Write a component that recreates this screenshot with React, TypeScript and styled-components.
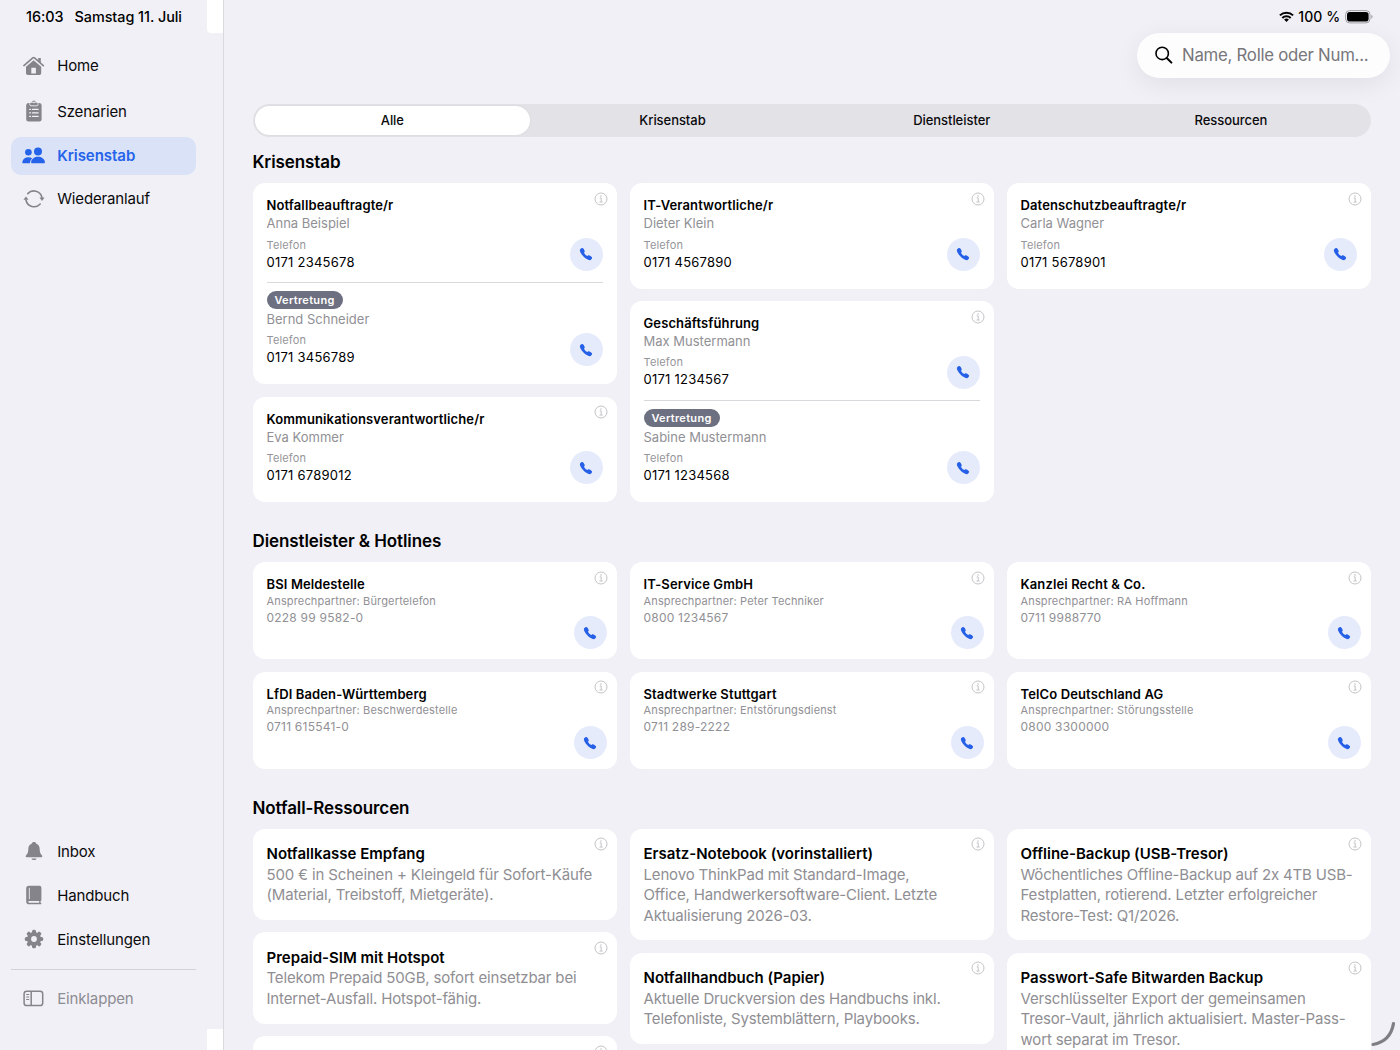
import React from "react";
import styled, { createGlobalStyle, css } from "styled-components";
import { IoCall } from "react-icons/io5";

const GlobalStyle = createGlobalStyle`
  *, *::before, *::after { box-sizing: border-box; }
  html, body { margin: 0; background: #f1f0f6; }
  body {
    font-family: Inter, "Liberation Sans", sans-serif;
    font-feature-settings: "calt" 0;
    color: #000;
    overflow: hidden;
  }
`;

const Shell = styled.div`
  position: relative;
  display: grid;
  grid-template-columns: 224px 1fr;
  grid-template-rows: 1050px;
  width: 1400px;
  height: 1050px;
  overflow: hidden;
  background: #f1f0f6;
`;

/* ---------- sidebar ---------- */

const Sidebar = styled.aside`
  position: relative;
  display: flex;
  flex-direction: column;
  padding: 0 27px 0 11px;
  border-right: 1px solid #dad9de;
`;

const EdgePatch = styled.span<{ $at: "top" | "bottom" }>`
  position: absolute;
  right: 0;
  width: 16px;
  background: #fff;
  ${(p) =>
    p.$at === "top"
      ? css`
          top: 0;
          height: 33px;
          border-bottom-left-radius: 4px;
        `
      : css`
          bottom: 0;
          height: 21px;
        `}
`;

const Clock = styled.div`
  display: flex;
  gap: 11px;
  height: 46px;
  padding: 8px 0 0 15px;
  font-size: 14.4px;
  font-weight: 500;
  line-height: 18px;
  letter-spacing: -0.04px;
  white-space: nowrap;
`;

const Nav = styled.nav`
  display: flex;
  flex-direction: column;
  gap: 6px;
`;

const NavFooter = styled(Nav)`
  margin-top: auto;
  padding-bottom: 10.5px;
`;

const NavItem = styled.a<{ $height?: number; $active?: boolean; $muted?: boolean }>`
  display: flex;
  align-items: center;
  height: ${(p) => p.$height ?? 38}px;
  border-radius: 10px;
  font-size: 15px;
  letter-spacing: -0.14px;
  color: ${(p) => (p.$muted ? "#8d8c92" : "#0a0a0c")};
  ${(p) =>
    p.$active &&
    css`
      background: #d9e2f6;
      color: #2563eb;
      font-weight: 600;
      letter-spacing: -0.04px;
    `}
`;

const NavIcon = styled.span<{ $active?: boolean }>`
  display: flex;
  align-items: center;
  justify-content: center;
  width: 45px;
  margin-right: 1.2px;
  color: ${(p) => (p.$active ? "#2563eb" : "#85848a")};
`;

const Rule = styled.hr`
  width: 185px;
  height: 1px;
  margin: 0;
  border: 0;
  background: #d3d2d8;
`;

const Collapse = styled.div`
  padding: 10px 0 32.5px;
`;

/* ---------- main ---------- */

const Main = styled.main`
  min-width: 0;
  padding: 0 28.8px 0 28.5px;
`;

const DeviceStatus = styled.div`
  display: flex;
  align-items: center;
  justify-content: flex-end;
  height: 33px;
  margin-right: -1.6px;
  font-size: 14px;
  font-weight: 500;
`;

const Percent = styled.span`
  margin: 0 4.5px 0 4px;
  letter-spacing: 0.1px;
`;

const SearchRow = styled.div`
  display: flex;
  justify-content: flex-end;
  height: 71px;
  margin-right: -18.8px;
`;

const SearchField = styled.div`
  display: flex;
  align-items: center;
  gap: 9px;
  width: 253px;
  height: 44.5px;
  padding-left: 18px;
  border-radius: 23px;
  background: #fdfdfe;
  box-shadow: 0 6px 26px rgba(0, 0, 0, 0.07);
  color: #77767b;
  font-size: 16.8px;
  letter-spacing: -0.26px;
  white-space: nowrap;
`;

const Segments = styled.div`
  display: grid;
  grid-template-columns: repeat(4, 1fr);
  height: 32.5px;
  padding: 2px 0 2px 2px;
  border-radius: 17px;
  background: #e3e2e7;
`;

const Segment = styled.button<{ $active?: boolean }>`
  border: 0;
  padding: 0;
  border-radius: 15px;
  font: inherit;
  font-size: 13px;
  font-weight: 500;
  letter-spacing: -0.05px;
  color: #0a0a0c;
  background: ${(p) => (p.$active ? "#fff" : "transparent")};
  box-shadow: ${(p) => (p.$active ? "0 0 3px rgba(0,0,0,0.06)" : "none")};
  margin-right: ${(p) => (p.$active ? "3.5px" : "1.5px")};
`;

const Section = styled.section<{ $offset: number }>`
  padding-top: ${(p) => p.$offset}px;
`;

const SectionTitle = styled.h2`
  margin: 0 0 10px;
  height: 22px;
  font-size: 17px;
  font-weight: 600;
  line-height: 22px;
  letter-spacing: -0.1px;
`;

const Columns = styled.div`
  display: grid;
  grid-template-columns: repeat(3, 1fr);
  column-gap: 12.3px;
  align-items: start;
`;

const Stack = styled.div`
  display: flex;
  flex-direction: column;
  gap: 12.4px;
`;

const Card = styled.article<{ $pad: string; $height?: number }>`
  position: relative;
  padding: ${(p) => p.$pad};
  height: ${(p) => (p.$height ? `${p.$height}px` : "auto")};
  border-radius: 12px;
  background: #fff;
`;

const InfoBadge = styled.span`
  position: absolute;
  top: 8.6px;
  right: 9.2px;
  display: flex;
  color: #bdbcc0;
`;

const RoleTitle = styled.h3`
  margin: 0;
  height: 18px;
  font-size: 13px;
  font-weight: 600;
  line-height: 18px;
  letter-spacing: 0.12px;
`;

const PersonName = styled.p`
  margin: 0 0 5.5px;
  height: 18px;
  color: #919095;
  font-size: 13px;
  line-height: 18px;
  letter-spacing: 0;
`;

const PhoneRow = styled.div`
  display: flex;
  align-items: center;
  justify-content: space-between;
  height: 33.5px;
`;

const FieldLabel = styled.div`
  height: 15px;
  color: #96959a;
  font-size: 11px;
  line-height: 15px;
  letter-spacing: 0.14px;
`;

const FieldValue = styled.div`
  height: 18.5px;
  font-size: 13px;
  line-height: 18px;
  letter-spacing: 0.24px;
`;

const CallButton = styled.button`
  display: flex;
  align-items: center;
  justify-content: center;
  flex: none;
  width: 33px;
  height: 33px;
  padding: 0 1px 0 0;
  border: 0;
  border-radius: 50%;
  background: #e6ebfc;
  color: #2560e6;
`;

const Deputy = styled.div`
  margin-top: 11.3px;
  padding-top: 8px;
  border-top: 1px solid #d9d8dc;
`;

const DeputyTag = styled.span`
  display: block;
  width: 76px;
  height: 18px;
  margin-bottom: 0.3px;
  border-radius: 9px;
  background: #6d7080;
  color: #fff;
  font-size: 11px;
  font-weight: 600;
  line-height: 18px;
  letter-spacing: 0.3px;
  text-align: center;
`;

const ProviderRow = styled.div`
  display: flex;
  justify-content: space-between;
  align-items: flex-end;
  height: 74.5px;
`;

const ProviderText = styled.div`
  align-self: flex-start;
`;

const ProviderContact = styled.p`
  margin: 0.6px 0 0;
  color: #919095;
  font-size: 11px;
  line-height: 15px;
  letter-spacing: 0.15px;
`;

const ProviderNumber = styled.p`
  margin: 1px 0 0;
  color: #919095;
  font-size: 12px;
  line-height: 16px;
  letter-spacing: 0.22px;
`;

const ResourceTitle = styled.h3`
  margin: 0;
  height: 20.4px;
  font-size: 15px;
  font-weight: 600;
  line-height: 20.4px;
  letter-spacing: 0;
`;

const ResourceText = styled.p`
  margin: 0;
  color: #8f8e93;
  font-size: 15px;
  line-height: 20.4px;
  letter-spacing: -0.16px;
  white-space: pre;
`;

const PencilStroke = styled.svg`
  position: absolute;
  right: 4px;
  bottom: 3px;
`;

/* ---------- drawings ---------- */

const HomeIcon = () => (
  <svg width="22" height="20" viewBox="0.4 0 22 20">
    <path d="M15.6 1.9h2.6v5.2l-2.6-2.4z" fill="currentColor" />
    <path d="M1.3 9.6L10.2 1.9a1.3 1.3 0 0 1 1.7 0L20.7 9.6" fill="none" stroke="currentColor" strokeWidth="1.6" strokeLinecap="round" />
    <path
      fillRule="evenodd"
      d="M3.4 10.7L11 4.2l7.6 6.5v6.600a1.8 1.8 0 0 1-1.8 1.8H5.2a1.8 1.8 0 0 1-1.8-1.800zM9.200 11.800a.5.5 0 0 0-.5.5v5.200h4.600v-5.200a.5.5 0 0 0-.5-.5z"
      fill="currentColor"
    />
  </svg>
);

const ClipboardIcon = () => (
  <svg width="18" height="22" viewBox="0 0 18 22">
    <rect x="1.2" y="3" width="15.4" height="18.4" rx="2.5" fill="currentColor" />
    <circle cx="8.9" cy="2.4" r="2" fill="currentColor" />
    <rect x="4.8" y="2.2" width="8.2" height="3.6" rx="1.2" fill="currentColor" stroke="#f1f0f6" strokeWidth="0.9" />
    <circle cx="8.9" cy="2.6" r="0.7" fill="#f1f0f6" />
    <path
      d="M4.6 9.3h.9M4.6 12.8h.9M4.6 16.3h.9M7.4 9.3h5.8M7.4 12.8h5.8M7.4 16.3h5.8"
      stroke="#f1f0f6"
      strokeWidth="1.2"
      strokeLinecap="round"
    />
  </svg>
);

const PeopleIcon = () => (
  <svg width="24" height="17" viewBox="0 0 24 17" fill="currentColor">
    <circle cx="6.4" cy="5.3" r="3.3" />
    <path d="M1.3 16.3C.4 16.3.2 15.8.3 15 .8 12 3.2 10.3 6.4 10.3c1.5 0 2.8.4 3.8 1.1C8.7 12.7 7.8 14.4 8 16.3z" />
    <circle cx="16" cy="4.4" r="4" />
    <path d="M10.3 16.3c-.9 0-1.3-.5-1.2-1.3.5-3.2 3.4-5.2 6.9-5.2s6.4 2 6.9 5.2c.1.8-.3 1.3-1.2 1.3z" />
  </svg>
);

const CycleIcon = () => (
  <svg width="22" height="20" viewBox="0 0 22 20" fill="none" stroke="currentColor" strokeWidth="1.6" strokeLinecap="round">
    <path d="M4.8 4.6A8.2 8.2 0 0 1 18.9 8.4" />
    <path d="M17.2 15A8.2 8.2 0 0 1 3 11" />
    <path d="M16.5 8.5h5.1L19 12z M0.4 10.8h5.1L3 7.4z" fill="currentColor" stroke="none" />
  </svg>
);

const BellIcon = () => (
  <svg width="18" height="20" viewBox="0 0 18 20" fill="currentColor">
    <path d="M9 1.1c-1.200 0-2 .7-2.300 1.700C4.300 3.600 3.300 5.700 3.300 8.200c0 3.400-.7 4.200-2 5.700-.4.5-.6.9-.6 1.300 0 .7.5 1.100 1.400 1.100h13.800c.9 0 1.400-.4 1.400-1.100 0-.4-.2-.8-.6-1.300-1.300-1.500-2-2.300-2-5.700 0-2.500-1-4.600-3.400-5.400C11 1.800 10.200 1.100 9 1.100z" />
    <path d="M6.500 17.400h5c-.2 1-1.200 1.700-2.500 1.700s-2.300-.7-2.500-1.700z" />
  </svg>
);

const BookIcon = () => (
  <svg width="18" height="20" viewBox="0 0 18 20">
    <path
      d="M4 .8h10.5a1.9 1.9 0 0 1 1.9 1.9v12.1a1.4 1.4 0 0 1-.8 1.3v1.8h.2a.7.7 0 0 1 0 1.4H4.2A3 3 0 0 1 1.2 16.4V3.6A2.8 2.8 0 0 1 4 .8z"
      fill="currentColor"
    />
    <path d="M4.3 2.8v11.4" stroke="#f1f0f6" strokeWidth="0.9" />
    <path d="M4.2 15.9h10v1.9h-10a.95.95 0 0 1 0-1.9z" fill="#f1f0f6" />
  </svg>
);

const GearIcon = () => (
  <svg width="20" height="20" viewBox="-10 -10 20 20">
    {[0, 45, 90, 135].map((angle) => (
      <rect key={angle} x="-2" y="-9.2" width="4" height="18.4" rx="1.5" fill="currentColor" transform={`rotate(${angle})`} />
    ))}
    <circle r="5.1" fill="none" stroke="currentColor" strokeWidth="4" />
    <circle r="2.9" fill="#f1f0f6" />
  </svg>
);

const PanelIcon = () => (
  <svg width="21" height="17" viewBox="0 0 21 17" fill="none" stroke="currentColor" strokeWidth="1.5">
    <rect x="1.1" y="1.2" width="18.6" height="14.4" rx="2.6" />
    <path d="M8.2 1.2v14.4" />
    <path d="M3.6 4.5h2.2M3.6 7h2.2M3.6 9.5h2.2" strokeWidth="1.1" strokeLinecap="round" />
  </svg>
);

const WifiIcon = () => (
  <svg width="15" height="12" viewBox="0 0 15 12" fill="none" stroke="#000" strokeWidth="2">
    <path d="M.9 4.4a9.4 9.4 0 0 1 13.2 0" />
    <path d="M3.3 7a6 6 0 0 1 8.4 0" />
    <path d="M7.5 11L5.1 8.6a3.4 3.4 0 0 1 4.8 0z" fill="#000" stroke="none" />
  </svg>
);

const BatteryIcon = () => (
  <svg width="28" height="14" viewBox="0 0 28 14">
    <rect x=".6" y=".6" width="24.4" height="12.3" rx="4" fill="none" stroke="#a09fa4" strokeWidth="1" />
    <rect x="2" y="2" width="21.6" height="9.5" rx="2.8" fill="#000" />
    <path d="M26.3 4.8a2.2 2.2 0 0 1 0 4z" fill="#a09fa4" />
  </svg>
);

const SearchIcon = () => (
  <svg width="18" height="18" viewBox="0 0 18 18" fill="none" stroke="#000" strokeLinecap="round">
    <circle cx="7.2" cy="7.4" r="6.2" strokeWidth="1.6" />
    <path d="M12 12.2l4.4 4.4" strokeWidth="2" />
  </svg>
);

const InfoIcon = () => (
  <svg width="14" height="14" viewBox="0 0 14 14" fill="none" stroke="currentColor">
    <circle cx="7" cy="7" r="6" strokeWidth="0.9" />
    <path d="M5.7 5.9h1.5v4M5.5 10h3.2" strokeWidth="0.9" />
    <circle cx="7" cy="3.9" r="0.75" fill="currentColor" stroke="none" />
  </svg>
);

/* ---------- data ---------- */

type Contact = { name: string; phone: string };
type Role = { title: string; main: Contact; deputy?: Contact };
type Provider = { title: string; partner: string; phone: string };
type Resource = { title: string; text: string };

const roles: Role[][] = [
  [
    {
      title: "Notfallbeauftragte/r",
      main: { name: "Anna Beispiel", phone: "0171 2345678" },
      deputy: { name: "Bernd Schneider", phone: "0171 3456789" },
    },
    { title: "Kommunikationsverantwortliche/r", main: { name: "Eva Kommer", phone: "0171 6789012" } },
  ],
  [
    { title: "IT-Verantwortliche/r", main: { name: "Dieter Klein", phone: "0171 4567890" } },
    {
      title: "Geschäftsführung",
      main: { name: "Max Mustermann", phone: "0171 1234567" },
      deputy: { name: "Sabine Mustermann", phone: "0171 1234568" },
    },
  ],
  [{ title: "Datenschutzbeauftragte/r", main: { name: "Carla Wagner", phone: "0171 5678901" } }],
];

const providers: Provider[][] = [
  [
    { title: "BSI Meldestelle", partner: "Bürgertelefon", phone: "0228 99 9582-0" },
    { title: "LfDI Baden-Württemberg", partner: "Beschwerdestelle", phone: "0711 615541-0" },
  ],
  [
    { title: "IT-Service GmbH", partner: "Peter Techniker", phone: "0800 1234567" },
    { title: "Stadtwerke Stuttgart", partner: "Entstörungsdienst", phone: "0711 289-2222" },
  ],
  [
    { title: "Kanzlei Recht & Co.", partner: "RA Hoffmann", phone: "0711 9988770" },
    { title: "TelCo Deutschland AG", partner: "Störungsstelle", phone: "0800 3300000" },
  ],
];

const resources: Resource[][] = [
  [
    {
      title: "Notfallkasse Empfang",
      text: "500 € in Scheinen + Kleingeld für Sofort-Käufe\n(Material, Treibstoff, Mietgeräte).",
    },
    {
      title: "Prepaid-SIM mit Hotspot",
      text: "Telekom Prepaid 50GB, sofort einsetzbar bei\nInternet-Ausfall. Hotspot-fähig.",
    },
    { title: "", text: "" },
  ],
  [
    {
      title: "Ersatz-Notebook (vorinstalliert)",
      text: "Lenovo ThinkPad mit Standard-Image,\nOffice, Handwerkersoftware-Client. Letzte\nAktualisierung 2026-03.",
    },
    {
      title: "Notfallhandbuch (Papier)",
      text: "Aktuelle Druckversion des Handbuchs inkl.\nTelefonliste, Systemblättern, Playbooks.",
    },
  ],
  [
    {
      title: "Offline-Backup (USB-Tresor)",
      text: "Wöchentliches Offline-Backup auf 2x 4TB USB-\nFestplatten, rotierend. Letzter erfolgreicher\nRestore-Test: Q1/2026.",
    },
    {
      title: "Passwort-Safe Bitwarden Backup",
      text: "Verschlüsselter Export der gemeinsamen\nTresor-Vault, jährlich aktualisiert. Master-Pass-\nwort separat im Tresor.",
    },
  ],
];

/* ---------- parts ---------- */

const Info = () => (
  <InfoBadge>
    <InfoIcon />
  </InfoBadge>
);

const Call = () => (
  <CallButton>
    <IoCall size={14} />
  </CallButton>
);

const ContactBlock = ({ contact }: { contact: Contact }) => (
  <>
    <PersonName>{contact.name}</PersonName>
    <PhoneRow>
      <div>
        <FieldLabel>Telefon</FieldLabel>
        <FieldValue>{contact.phone}</FieldValue>
      </div>
      <Call />
    </PhoneRow>
  </>
);

const RoleCard = ({ role }: { role: Role }) => (
  <Card $pad="13px 14px 17.6px">
    <Info />
    <RoleTitle>{role.title}</RoleTitle>
    <ContactBlock contact={role.main} />
    {role.deputy && (
      <Deputy>
        <DeputyTag>Vertretung</DeputyTag>
        <ContactBlock contact={role.deputy} />
      </Deputy>
    )}
  </Card>
);

const ProviderCard = ({ provider }: { provider: Provider }) => (
  <Card $pad="13px 10px 10px 14px">
    <Info />
    <ProviderRow>
      <ProviderText>
        <RoleTitle>{provider.title}</RoleTitle>
        <ProviderContact>Ansprechpartner: {provider.partner}</ProviderContact>
        <ProviderNumber>{provider.phone}</ProviderNumber>
      </ProviderText>
      <Call />
    </ProviderRow>
  </Card>
);

const ResourceCard = ({ resource }: { resource: Resource }) => (
  <Card $pad="15.8px 14px 14.3px" $height={resource.title ? undefined : 92}>
    <Info />
    <ResourceTitle>{resource.title}</ResourceTitle>
    <ResourceText>{resource.text}</ResourceText>
  </Card>
);

export default function App() {
  return (
    <>
      <GlobalStyle />
      <Shell>
        <Sidebar>
          <EdgePatch $at="top" />
          <EdgePatch $at="bottom" />
          <Clock>
            <span>16:03</span>
            <span>Samstag 11. Juli</span>
          </Clock>
          <Nav>
            <NavItem $height={39}>
              <NavIcon><HomeIcon /></NavIcon>
              Home
            </NavItem>
            <NavItem $height={40}>
              <NavIcon><ClipboardIcon /></NavIcon>
              Szenarien
            </NavItem>
            <NavItem $height={37.5} $active>
              <NavIcon $active><PeopleIcon /></NavIcon>
              Krisenstab
            </NavItem>
            <NavItem $height={36}>
              <NavIcon><CycleIcon /></NavIcon>
              Wiederanlauf
            </NavItem>
          </Nav>
          <NavFooter>
            <NavItem>
              <NavIcon><BellIcon /></NavIcon>
              Inbox
            </NavItem>
            <NavItem>
              <NavIcon><BookIcon /></NavIcon>
              Handbuch
            </NavItem>
            <NavItem>
              <NavIcon><GearIcon /></NavIcon>
              Einstellungen
            </NavItem>
          </NavFooter>
          <Rule />
          <Collapse>
            <NavItem $muted>
              <NavIcon><PanelIcon /></NavIcon>
              Einklappen
            </NavItem>
          </Collapse>
        </Sidebar>

        <Main>
          <DeviceStatus>
            <WifiIcon />
            <Percent>100 %</Percent>
            <BatteryIcon />
          </DeviceStatus>
          <SearchRow>
            <SearchField>
              <SearchIcon />
              Name, Rolle oder Num...
            </SearchField>
          </SearchRow>
          <Segments>
            <Segment $active>Alle</Segment>
            <Segment>Krisenstab</Segment>
            <Segment>Dienstleister</Segment>
            <Segment>Ressourcen</Segment>
          </Segments>

          <Section $offset={14.5}>
            <SectionTitle>Krisenstab</SectionTitle>
            <Columns>
              {roles.map((column, i) => (
                <Stack key={i}>
                  {column.map((role) => <RoleCard key={role.title} role={role} />)}
                </Stack>
              ))}
            </Columns>
          </Section>

          <Section $offset={27.8}>
            <SectionTitle>Dienstleister &amp; Hotlines</SectionTitle>
            <Columns>
              {providers.map((column, i) => (
                <Stack key={i}>
                  {column.map((p) => <ProviderCard key={p.title} provider={p} />)}
                </Stack>
              ))}
            </Columns>
          </Section>

          <Section $offset={27.2}>
            <SectionTitle>Notfall-Ressourcen</SectionTitle>
            <Columns>
              {resources.map((column, i) => (
                <Stack key={i}>
                  {column.map((r) => <ResourceCard key={r.title} resource={r} />)}
                </Stack>
              ))}
            </Columns>
          </Section>
        </Main>

        <PencilStroke width="25" height="26" viewBox="0 0 25 26" fill="none">
          <path d="M2 23.5C13 21.5 20.5 14.5 22.5 2.5" stroke="#7f7e83" strokeWidth="3.2" strokeLinecap="round" />
        </PencilStroke>
      </Shell>
    </>
  );
}
